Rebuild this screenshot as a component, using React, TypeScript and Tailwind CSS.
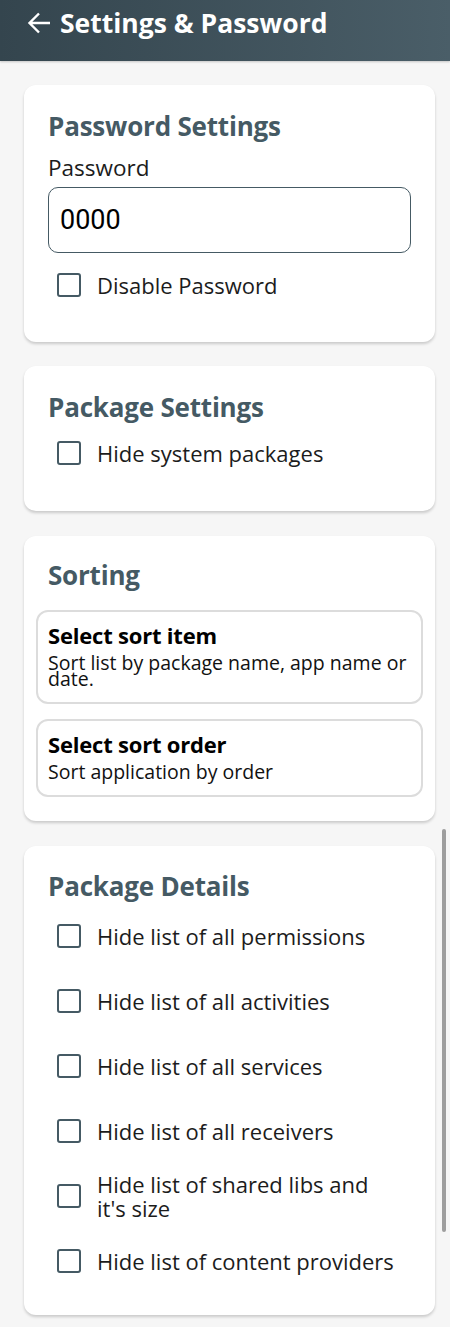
const font = { fontFamily: '"Open Sans", "Noto Sans", sans-serif' };

const Box = () => (
    <span className="w-[24px] h-[24px] shrink-0 rounded-[3px] border-[2.5px] border-[#455a64] bg-white" />
);

const Checkbox = ({ label }: { label: string }) => (
    <label className="h-[65px] flex items-center gap-[16px] pl-[9px]">
        <Box />
        <span className="w-[300px] text-[22px] leading-[24px] text-[#1c1c1c]">{label}</span>
    </label>
);

const Card = ({ title, children, className = '' }: { title: string; children: React.ReactNode; className?: string }) => (
    <section className={`ml-[24px] w-[411px] bg-white rounded-[12px] shadow-[0_2px_3px_rgba(0,0,0,0.18)] ${className}`}>
        <h2 className="px-[24px] text-[26px] font-bold text-[#455a64] leading-[30px] tracking-[-0.2px]">{title}</h2>
        {children}
    </section>
);

const SortItem = ({ title, desc }: { title: string; desc: string }) => (
    <div className="mx-[12px] border-[2px] border-[#dcdcdc] rounded-[12px] px-[10px] pt-[10px] pb-[15px]">
        <div className="text-[22px] font-bold leading-[26px] tracking-[-0.2px] text-black">{title}</div>
        <div className="text-[19.5px] leading-[16px] mt-[7px] text-[#111]">{desc}</div>
    </div>
);

const App = () => {
    const details = [
        'Hide list of all permissions',
        'Hide list of all activities',
        'Hide list of all services',
        'Hide list of all receivers',
        "Hide list of shared libs and it's size",
        'Hide list of content providers',
    ];

    return (
        <div className="relative w-[450px] h-[1327px] bg-[#f6f6f6] overflow-hidden" style={font}>
            <header className="h-[61px] flex items-start gap-[9px] pl-[27px] pt-[8px] bg-gradient-to-r from-[#34454e] to-[#4a5e68] text-white shadow-[0_1px_2px_rgba(0,0,0,0.2)]">
                <svg viewBox="0 0 24 24" className="w-[24px] h-[24px] mt-[3px]" fill="none" stroke="currentColor" strokeWidth={2.4}>
                    <path d="M23 12H2.5M12 2.5L2.5 12L12 21.5" />
                </svg>
                <h1 className="text-[26.5px] font-bold leading-[30px]">Settings &amp; Password</h1>
            </header>

            <Card title="Password Settings" className="mt-[24px] pt-[26px] pb-[45px]">
                <div className="px-[24px] mt-[15px] text-[22.5px] leading-[24px] text-[#1c1c1c]">Password</div>
                <div className="mx-[24px] mt-[7px] h-[66px] border-[1.5px] border-[#455a64] rounded-[10px] flex items-center px-[11px]">
                    <span className="text-[27px] text-black" style={{ fontFamily: 'Roboto, sans-serif' }}>0000</span>
                </div>
                <div className="px-[24px] mt-[20px]">
                    <div className="flex items-center gap-[16px] pl-[9px]">
                        <Box />
                        <span className="text-[22px] leading-[24px] text-[#1c1c1c]">Disable Password</span>
                    </div>
                </div>
            </Card>

            <Card title="Package Settings" className="mt-[24px] pt-[26px] pb-[46px]">
                <div className="px-[24px] mt-[19px]">
                    <div className="flex items-center gap-[16px] pl-[9px]">
                        <Box />
                        <span className="text-[22px] leading-[24px] text-[#1c1c1c]">Hide system packages</span>
                    </div>
                </div>
            </Card>

            <Card title="Sorting" className="mt-[25px] pt-[24px] pb-[24px]">
                <div className="mt-[20px] flex flex-col gap-[15px]">
                    <SortItem title="Select sort item" desc="Sort list by package name, app name or date." />
                    <SortItem title="Select sort order" desc="Sort application by order" />
                </div>
            </Card>

            <Card title="Package Details" className="mt-[25px] pt-[25px] pb-[22px]">
                <div className="px-[24px] mt-[2px] flex flex-col">
                    {details.map((d) => (
                        <Checkbox key={d} label={d} />
                    ))}
                </div>
            </Card>

            <div className="absolute right-[4px] top-[829px] w-[4px] h-[403px] bg-[#9e9e9e] rounded-full" />
        </div>
    );
};

export default App;
